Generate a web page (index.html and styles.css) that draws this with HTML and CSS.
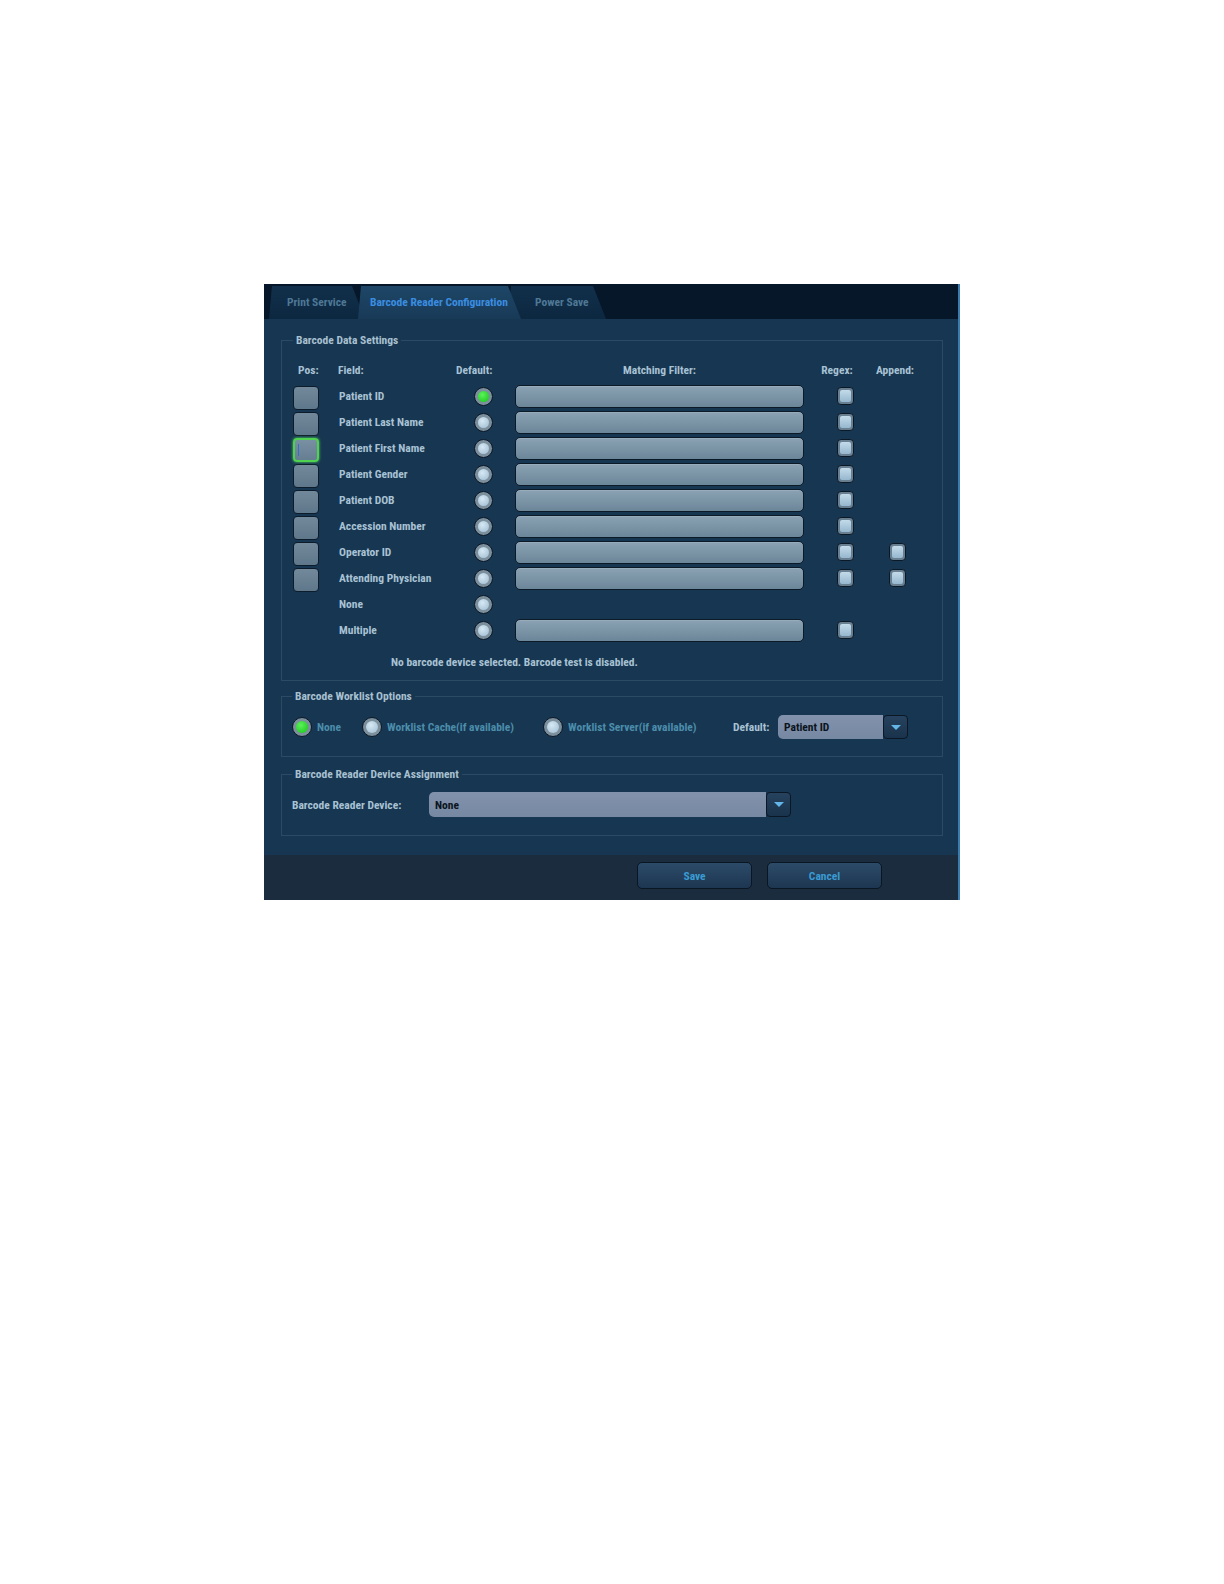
FILE: index.html
```html
<!DOCTYPE html>
<html>
<head>
<meta charset="utf-8">
<title>Barcode Reader Configuration</title>
<link rel="stylesheet" href="styles.css">
</head>
<body>
<div class="page">
  <div class="panel">
    <div class="tabbar">
      <div class="tab tab-print">Print Service</div>
      <div class="tab tab-active">Barcode Reader Configuration</div>
      <div class="tab tab-power">Power Save</div>
    </div>
    <div class="body">
      <fieldset class="group group-data">
        <legend>Barcode Data Settings</legend>
        <div class="grid">
          <div class="hd hd-pos">Pos:</div>
          <div class="hd hd-field">Field:</div>
          <div class="hd hd-default">Default:</div>
          <div class="hd hd-filter">Matching Filter:</div>
          <div class="hd hd-regex">Regex:</div>
          <div class="hd hd-append">Append:</div>

          <div class="c-pos"><span class="pos"></span></div>
          <div class="c-field">Patient ID</div>
          <div class="c-radio"><span class="radio on"></span></div>
          <div class="c-filter"><span class="filter"></span></div>
          <div class="c-regex"><span class="check"></span></div>
          <div class="c-append"></div>

          <div class="c-pos"><span class="pos"></span></div>
          <div class="c-field">Patient Last Name</div>
          <div class="c-radio"><span class="radio"></span></div>
          <div class="c-filter"><span class="filter"></span></div>
          <div class="c-regex"><span class="check"></span></div>
          <div class="c-append"></div>

          <div class="c-pos"><span class="pos focused"><span class="caret"></span></span></div>
          <div class="c-field">Patient First Name</div>
          <div class="c-radio"><span class="radio"></span></div>
          <div class="c-filter"><span class="filter"></span></div>
          <div class="c-regex"><span class="check"></span></div>
          <div class="c-append"></div>

          <div class="c-pos"><span class="pos"></span></div>
          <div class="c-field">Patient Gender</div>
          <div class="c-radio"><span class="radio"></span></div>
          <div class="c-filter"><span class="filter"></span></div>
          <div class="c-regex"><span class="check"></span></div>
          <div class="c-append"></div>

          <div class="c-pos"><span class="pos"></span></div>
          <div class="c-field">Patient DOB</div>
          <div class="c-radio"><span class="radio"></span></div>
          <div class="c-filter"><span class="filter"></span></div>
          <div class="c-regex"><span class="check"></span></div>
          <div class="c-append"></div>

          <div class="c-pos"><span class="pos"></span></div>
          <div class="c-field">Accession Number</div>
          <div class="c-radio"><span class="radio"></span></div>
          <div class="c-filter"><span class="filter"></span></div>
          <div class="c-regex"><span class="check"></span></div>
          <div class="c-append"></div>

          <div class="c-pos"><span class="pos"></span></div>
          <div class="c-field">Operator ID</div>
          <div class="c-radio"><span class="radio"></span></div>
          <div class="c-filter"><span class="filter"></span></div>
          <div class="c-regex"><span class="check"></span></div>
          <div class="c-append"><span class="check"></span></div>

          <div class="c-pos"><span class="pos"></span></div>
          <div class="c-field">Attending Physician</div>
          <div class="c-radio"><span class="radio"></span></div>
          <div class="c-filter"><span class="filter"></span></div>
          <div class="c-regex"><span class="check"></span></div>
          <div class="c-append"><span class="check"></span></div>

          <div class="c-pos"></div>
          <div class="c-field">None</div>
          <div class="c-radio"><span class="radio"></span></div>
          <div class="c-filter"></div>
          <div class="c-regex"></div>
          <div class="c-append"></div>

          <div class="c-pos"></div>
          <div class="c-field">Multiple</div>
          <div class="c-radio"><span class="radio"></span></div>
          <div class="c-filter"><span class="filter"></span></div>
          <div class="c-regex"><span class="check"></span></div>
          <div class="c-append"></div>
        </div>
        <div class="message">No barcode device selected. Barcode test is disabled.</div>
      </fieldset>

      <fieldset class="group group-worklist">
        <legend>Barcode Worklist Options</legend>
        <div class="wl-row">
          <div class="opt opt-1"><span class="radio big on"></span><span class="opt-label">None</span></div>
          <div class="opt opt-2"><span class="radio big"></span><span class="opt-label">Worklist Cache(if available)</span></div>
          <div class="opt opt-3"><span class="radio big"></span><span class="opt-label">Worklist Server(if available)</span></div>
          <div class="wl-default">Default:</div>
          <div class="combo combo-small">
            <div class="combo-field">Patient ID</div>
            <div class="combo-btn"><span class="tri"></span></div>
          </div>
        </div>
      </fieldset>

      <fieldset class="group group-device">
        <legend>Barcode Reader Device Assignment</legend>
        <div class="dev-row">
          <div class="dev-label">Barcode Reader Device:</div>
          <div class="combo combo-wide">
            <div class="combo-field">None</div>
            <div class="combo-btn"><span class="tri"></span></div>
          </div>
        </div>
      </fieldset>
    </div>
    <div class="footer">
      <button class="btn">Save</button>
      <button class="btn">Cancel</button>
    </div>
  </div>
</div>
</body>
</html>
```

FILE: styles.css
```css
html, body {
  margin: 0;
  padding: 0;
  background: #ffffff;
}

.page {
  padding: 284px 0 0 264px;
}

.panel {
  width: 696px;
  box-sizing: border-box;
  border-right: 2px solid #3a7cae;
  background: #173651;
  font-family: "Liberation Sans Narrow", "Roboto Condensed", "Roboto", sans-serif;
  font-weight: 700;
  font-size: 11.5px;
  color: #a8c2d4;
}

/* ---------- tabs ---------- */
.tabbar {
  height: 35px;
  box-sizing: border-box;
  padding: 2px 0 0 5px;
  background: #061729;
  display: flex;
  align-items: stretch;
}

.tab {
  height: 33px;
  line-height: 33px;
  box-sizing: border-box;
  white-space: nowrap;
  clip-path: polygon(0 100%, 3px 0, calc(100% - 13px) 0, 100% 100%);
}

.tab-print {
  width: 96px;
  padding-left: 18px;
  background: linear-gradient(#12304b, #0c2740);
  color: #4e7896;
  z-index: 1;
}

.tab-active {
  width: 163px;
  margin-left: -7px;
  padding-left: 12px;
  background: linear-gradient(#1e4667, #183a57);
  color: #3a8de0;
  z-index: 3;
}

.tab-power {
  width: 98px;
  margin-left: -13px;
  padding-left: 27px;
  background: linear-gradient(#12304b, #0c2740);
  color: #4e7896;
  z-index: 2;
}

/* ---------- body ---------- */
.body {
  padding: 14px 15px 19px 17px;
  background: #173651;
}

fieldset.group {
  margin: 0;
  padding: 10px 11px 11px 11px;
  border: 1px solid #2b4b65;
  min-width: 0;
}

fieldset.group legend {
  padding: 0 3px;
  line-height: 14px;
  color: #a8c0d0;
}

/* ---------- data grid ---------- */
.grid {
  display: grid;
  grid-template-columns: 26px 137px 59px 289px 66px 50px;
  grid-template-rows: repeat(11, 26px);
}

.hd {
  align-self: center;
  line-height: 14px;
  white-space: nowrap;
}

.hd-pos { padding-left: 5px; }
.hd-field { padding-left: 19px; }
.hd-filter, .hd-regex, .hd-append { text-align: center; }

.c-pos { align-self: start; padding-top: 3px; }
.c-field { align-self: center; padding-left: 20px; line-height: 14px; white-space: nowrap; }
.c-radio { align-self: center; padding-left: 18px; display: flex; }
.c-filter { align-self: center; display: flex; }
.c-regex { align-self: center; padding-left: 33px; display: flex; }
.c-append { align-self: center; padding-left: 19px; display: flex; }

.pos {
  display: block;
  position: relative;
  width: 26px;
  height: 24px;
  box-sizing: border-box;
  border: 1px solid #0d1c2a;
  border-radius: 4px;
  background: linear-gradient(#72899b, #5f778a);
}

.pos.focused {
  border: 2px solid #4fd24f;
  box-shadow: 0 0 3px #5de05d;
  background: linear-gradient(#7890a2, #667e91);
}

.caret {
  position: absolute;
  left: 3px;
  top: 4px;
  width: 1px;
  height: 12px;
  background: #3a6fc0;
}

.radio {
  width: 19px;
  height: 19px;
  box-sizing: border-box;
  border-radius: 50%;
  border: 1px solid #0b1725;
  background: #7c8f9d;
  display: flex;
  align-items: center;
  justify-content: center;
}

.radio::after {
  content: "";
  width: 11px;
  height: 11px;
  border-radius: 50%;
  background: radial-gradient(circle at 40% 35%, #d6e8f4, #9dbbd0);
}

.radio.on::after {
  background: radial-gradient(circle at 40% 35%, #5cf25c, #14c414);
}

.radio.big {
  width: 20px;
  height: 20px;
}

.radio.big::after {
  width: 12px;
  height: 12px;
}

.filter {
  display: block;
  width: 289px;
  height: 23px;
  box-sizing: border-box;
  border: 1px solid #0c1a28;
  border-radius: 5px;
  background: linear-gradient(#8aa2b3, #6c8699);
  box-shadow: inset 0 1px 0 rgba(255, 255, 255, 0.12);
}

.check {
  width: 17px;
  height: 18px;
  box-sizing: border-box;
  border: 1px solid #0b1826;
  border-radius: 4px;
  background: #677f91;
  display: flex;
  align-items: center;
  justify-content: center;
}

.check::after {
  content: "";
  width: 11px;
  height: 12px;
  border-radius: 2px;
  background: linear-gradient(#c3dbea, #96b7ce);
}

.message {
  margin-top: 12px;
  padding-left: 98px;
  line-height: 14px;
  white-space: nowrap;
}

/* ---------- worklist ---------- */
fieldset.group-worklist {
  margin-top: 8px;
  padding: 12px 11px 17px 10px;
}

.wl-row {
  display: flex;
  align-items: center;
  height: 24px;
}

.opt {
  display: flex;
  align-items: center;
  gap: 5px;
  white-space: nowrap;
}

.opt-1 { width: 70px; }
.opt-2 { width: 181px; }
.opt-3 { width: 190px; }

.opt-label {
  color: #4b8dab;
  line-height: 14px;
}

.wl-default {
  width: 45px;
  white-space: nowrap;
}

.combo {
  display: flex;
}

.combo-small {
  width: 130px;
  height: 24px;
}

.combo-wide {
  width: 362px;
  height: 25px;
}

.combo-field {
  flex: 1;
  background: linear-gradient(#8292ad, #7788a2);
  border-radius: 5px 0 0 5px;
  color: #0a1420;
  padding-left: 6px;
  display: flex;
  align-items: center;
  white-space: nowrap;
}

.combo-btn {
  width: 25px;
  box-sizing: border-box;
  border: 1px solid #0b1724;
  border-radius: 4px;
  background: linear-gradient(#26425e, #1a334c);
  display: flex;
  align-items: center;
  justify-content: center;
}

.tri {
  width: 0;
  height: 0;
  border-left: 5px solid transparent;
  border-right: 5px solid transparent;
  border-top: 5px solid #63b6e8;
}

/* ---------- device ---------- */
fieldset.group-device {
  margin-top: 10px;
  padding: 11px 11px 18px 10px;
}

.dev-row {
  display: flex;
  align-items: center;
  height: 25px;
}

.dev-label {
  width: 137px;
  white-space: nowrap;
}

/* ---------- footer ---------- */
.footer {
  height: 45px;
  box-sizing: border-box;
  background: #1a2c3e;
  display: flex;
  justify-content: flex-end;
  align-items: flex-start;
  gap: 15px;
  padding: 7px 76px 0 0;
}

.btn {
  width: 115px;
  height: 27px;
  border: 1px solid #0a1622;
  border-radius: 5px;
  background: linear-gradient(#2c4b68, #1d3651);
  color: #3a9bd2;
  font: inherit;
  font-weight: 700;
  padding: 0;
}
```
